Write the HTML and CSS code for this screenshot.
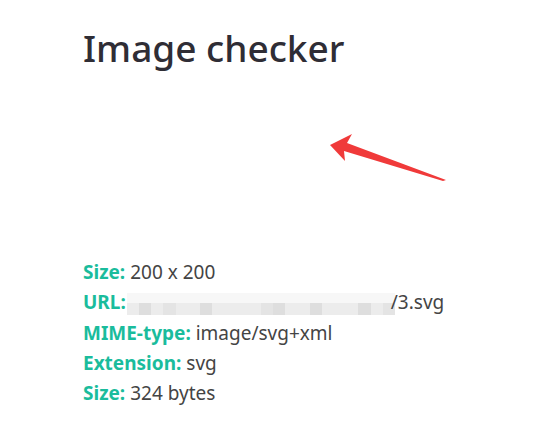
FILE: index.html
```html
<!DOCTYPE html>
<html lang="en">
<head>
<meta charset="UTF-8" />
<title>Image checker</title>
<link rel="stylesheet" href="styles.css">
</head>
<body>
<main class="page">
  <h1>Image checker</h1>
  <div class="preview">
    <svg class="arrow" width="130" height="60" viewBox="0 0 130 60">
      <path d="M0 11 L22 0 L17 9 L116 46 L113 47 L14 17 L15 27 Z" fill="#f03a3a"/>
    </svg>
  </div>
  <ul class="info">
    <li><b>Size:</b> 200 x 200</li>
    <li><b>URL:</b> <span class="blur">
      <i class="b1"></i><i class="b2"></i><i class="b1"></i><i class="b3"></i><i class="b1"></i><i class="b1"></i><i class="b2"></i><i class="b1"></i><i class="b1"></i><i class="b1"></i><i class="b1"></i><i class="b3"></i><i class="b2"></i><i class="b1"></i><i class="b1"></i><i class="b2"></i><i class="b1"></i><i class="b1"></i><i class="b1"></i><i class="b2"></i><i class="b1"></i><i class="b3"></i>
    </span>/3.svg</li>
    <li><b>MIME-type:</b> image/svg+xml</li>
    <li><b>Extension:</b> svg</li>
    <li><b>Size:</b> 324 bytes</li>
  </ul>
</main>
</body>
</html>
```

FILE: styles.css
```css
body {
  margin: 0;
  background: #fff;
  font-family: 'Noto Sans', 'Open Sans', sans-serif;
  color: #333;
}

.page {
  padding: 20px 0 0 83px;
}

h1 {
  margin: 0;
  font-size: 37px;
  font-weight: 500;
  color: #2f2d35;
  line-height: 56px;
}

.preview {
  position: relative;
  height: 181px;
}

.arrow {
  position: absolute;
  left: 247px;
  top: 58px;
}

.info {
  list-style: none;
  margin: 0;
  padding: 0;
  font-size: 19px;
  line-height: 30.3px;
  color: #444;
}

.info b {
  color: #1abc9c;
  font-weight: 700;
}

.blur {
  display: inline-flex;
  vertical-align: middle;
  height: 22px;
  width: 268px;
  margin-left: -4px;
  margin-right: -4px;
  background: linear-gradient(#f7f7f7 0 45%, transparent 45%);
}

.blur i {
  flex: 1;
  margin-top: 10px;
  background: #ececec;
}

.blur .b2 { background: #dedede; }
.blur .b3 { background: #e4e4e4; }
```
